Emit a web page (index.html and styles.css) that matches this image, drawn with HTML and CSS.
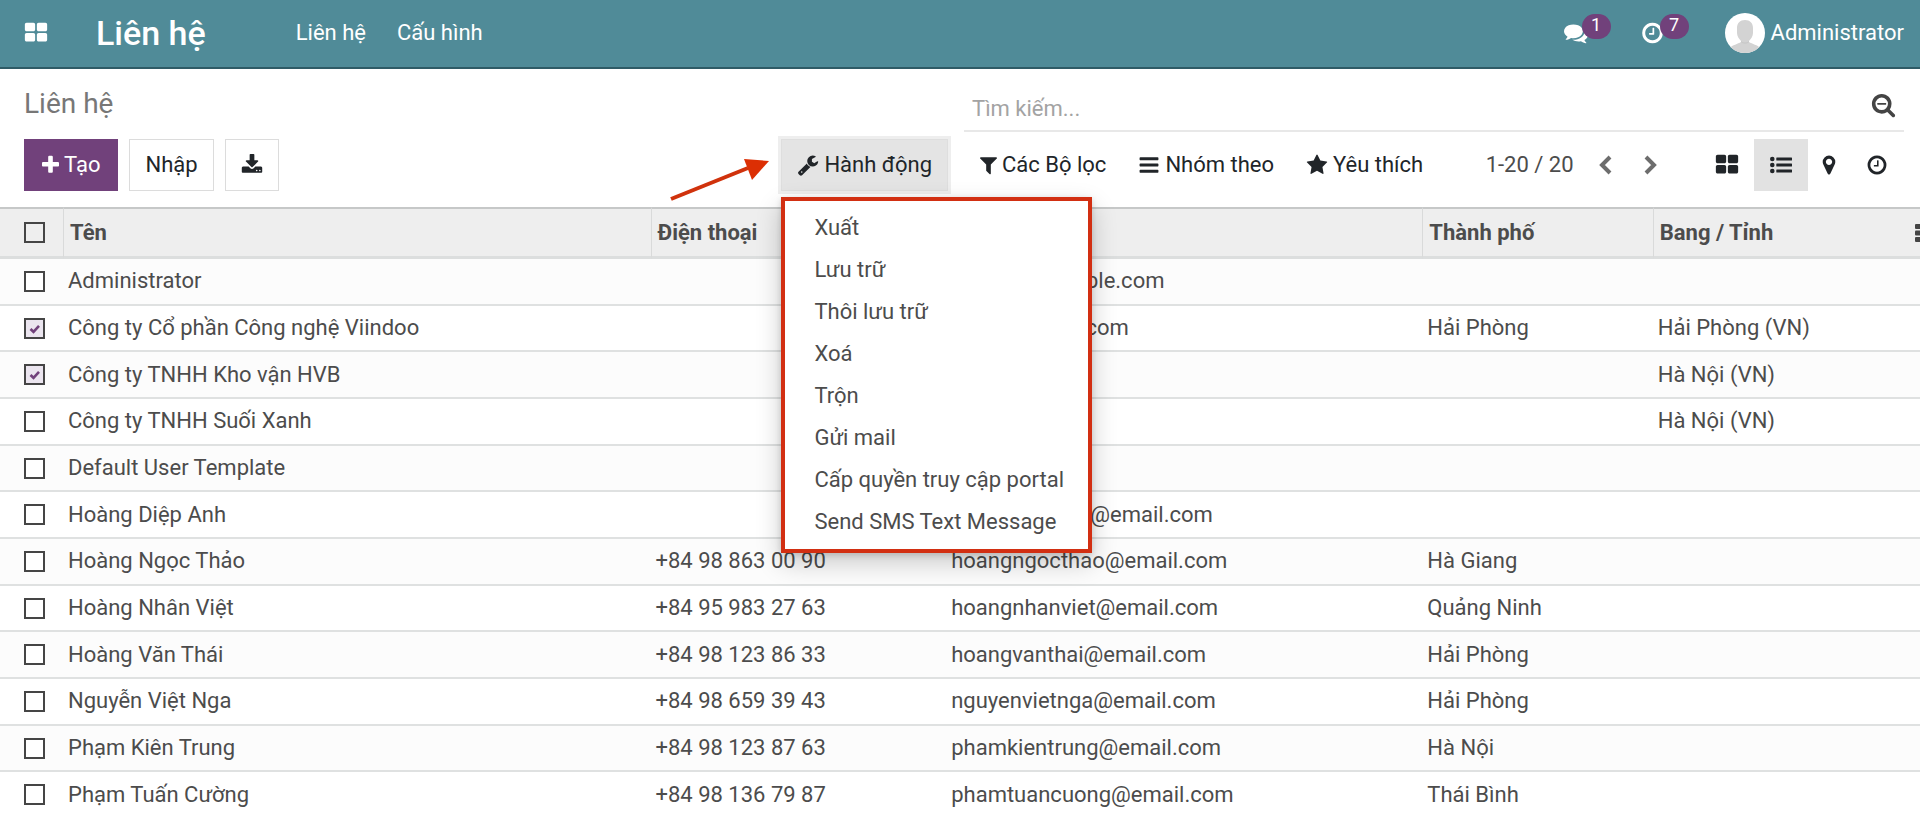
FILE: index.html
```html
<!DOCTYPE html>
<html lang="vi">
<head>
<meta charset="utf-8">
<meta name="viewport" content="width=device-width, initial-scale=1">
<title>Liên hệ</title>
<link rel="stylesheet" href="styles.css">
</head>
<body>
<svg class="sprite" aria-hidden="true">
  <symbol id="i-apps" viewBox="0 0 1792 1792"><path d="M832 1024v384q0 52-38 90t-90 38h-512q-52 0-90-38t-38-90v-384q0-52 38-90t90-38h512q52 0 90 38t38 90zm0-768v384q0 52-38 90t-90 38h-512q-52 0-90-38t-38-90v-384q0-52 38-90t90-38h512q52 0 90 38t38 90zm896 768v384q0 52-38 90t-90 38h-512q-52 0-90-38t-38-90v-384q0-52 38-90t90-38h512q52 0 90 38t38 90zm0-768v384q0 52-38 90t-90 38h-512q-52 0-90-38t-38-90v-384q0-52 38-90t90-38h512q52 0 90 38t38 90z"/></symbol>
  <symbol id="i-plus" viewBox="192 0 1408 1792"><path d="M1600 736v192q0 40-28 68t-68 28h-416v416q0 40-28 68t-68 28h-192q-40 0-68-28t-28-68v-416h-416q-40 0-68-28t-28-68v-192q0-40 28-68t68-28h416v-416q0-40 28-68t68-28h192q40 0 68 28t28 68v416h416q40 0 68 28t28 68z"/></symbol>
  <symbol id="i-star" viewBox="0 0 1792 1792"><path d="M1728 647q0 22-26 48l-363 354 86 500q1 7 1 20 0 21-10.500 35.500t-30.500 14.500q-19 0-40-12l-449-236-449 236q-22 12-40 12-21 0-31.500-14.500t-10.500-35.500q0-6 2-20l86-500-364-354q-25-27-25-48 0-37 56-46l502-73 225-455q19-41 49-41t49 41l225 455 502 73q56 9 56 46z"/></symbol>
  <symbol id="i-bars" viewBox="0 0 1792 1792"><path d="M1664 1344v128q0 26-19 45t-45 19h-1408q-26 0-45-19t-19-45v-128q0-26 19-45t45-19h1408q26 0 45 19t19 45zm0-512v128q0 26-19 45t-45 19h-1408q-26 0-45-19t-19-45v-128q0-26 19-45t45-19h1408q26 0 45 19t19 45zm0-512v128q0 26-19 45t-45 19h-1408q-26 0-45-19t-19-45v-128q0-26 19-45t45-19h1408q26 0 45 19t19 45z"/></symbol>
  <symbol id="i-filter" viewBox="192 0 1408 1792"><path d="M1595 295q17 41-14 70l-493 493v742q0 42-39 59-13 5-25 5-27 0-45-19l-256-256q-19-19-19-45v-486l-493-493q-31-29-14-70 17-39 59-39h1280q42 0 59 39z"/></symbol>
  <symbol id="i-wrench" viewBox="0 0 1792 1792"><path d="M448 1472q0-26-19-45t-45-19-45 19-19 45 19 45 45 19 45-19 19-45zm644-420l-682 682q-37 37-90 37-52 0-91-37l-106-108q-38-36-38-90 0-53 38-91l681-681q39 98 114.500 173.500t173.500 114.500zm634-435q0 39-23 106-47 134-164.500 217.500t-258.500 83.500q-185 0-316.500-131.500t-131.500-316.500 131.500-316.500 316.500-131.500q58 0 121.500 16.500t107.500 46.500q16 11 16 28t-16 28l-293 169v224l193 107q5-3 79-48.500t135.500-81 70.500-35.500q15 0 23.500 10t8.500 25z"/></symbol>
  <symbol id="i-clock" viewBox="128 0 1536 1792"><path d="M1024 544v448q0 14-9 23t-23 9h-320q-14 0-23-9t-9-23v-64q0-14 9-23t23-9h224v-352q0-14 9-23t23-9h64q14 0 23 9t9 23zm416 352q0-148-73-273t-198-198-273-73-273 73-198 198-73 273 73 273 198 198 273 73 273-73 198-198 73-273zm224 0q0 209-103 385.500t-279.500 279.500-385.500 103-385.500-103-279.500-279.500-103-385.500 103-385.500 279.500-279.500 385.500-103 385.500 103 279.500 279.500 103 385.500z"/></symbol>
  <symbol id="i-pin" viewBox="0 0 1792 1792"><path d="M1152 640q0-106-75-181t-181-75-181 75-75 181 75 181 181 75 181-75 75-181zm256 0q0 109-33 179l-364 774q-16 33-47.500 52t-67.500 19-67.500-19-46.500-52l-365-774q-33-70-33-179 0-212 150-362t362-150 362 150 150 362z"/></symbol>
  <symbol id="i-list" viewBox="0 0 22 22"><circle cx="2.300" cy="5" r="2.300"/><circle cx="2.300" cy="11" r="2.300"/><circle cx="2.300" cy="17" r="2.300"/><rect x="6.300" y="3.600" width="15.700" height="2.800" rx=".5"/><rect x="6.300" y="9.600" width="15.700" height="2.800" rx=".5"/><rect x="6.300" y="15.600" width="15.700" height="2.800" rx=".5"/></symbol>
  <symbol id="i-search" viewBox="0 0 1792 1792"><path d="M1088 672v64q0 13-9.500 22.500t-22.500 9.500h-576q-13 0-22.500-9.500t-9.500-22.500v-64q0-13 9.500-22.500t22.500-9.500h576q13 0 22.500 9.500t9.500 22.500zm128 32q0-185-131.500-316.500t-316.500-131.500-316.500 131.500-131.500 316.500 131.500 316.500 316.500 131.500 316.500-131.500 131.500-316.500zm512 832q0 53-37.500 90.500t-90.500 37.500q-54 0-90-38l-343-342q-179 124-399 124-143 0-273.500-55.500t-225-150-150-225-55.500-273.500 55.500-273.500 150-225 225-150 273.500-55.500 273.500 55.500 225 150 150 225 55.500 273.500q0 220-124 399l343 343q37 37 37 90z"/></symbol>
  <symbol id="i-download" viewBox="0 0 1792 1792"><path d="M1344 1344q0-26-19-45t-45-19-45 19-19 45 19 45 45 19 45-19 19-45zm256 0q0-26-19-45t-45-19-45 19-19 45 19 45 45 19 45-19 19-45zm128-224v320q0 40-28 68t-68 28h-1472q-40 0-68-28t-28-68v-320q0-40 28-68t68-28h465l135 136q58 56 136 56t136-56l136-136h464q40 0 68 28t28 68zm-325-569q17 41-14 70l-448 448q-18 19-45 19t-45-19l-448-448q-31-29-14-70 17-39 59-39h256v-448q0-26 19-45t45-19h256q26 0 45 19t19 45v448h256q42 0 59 39z"/></symbol>
  <symbol id="i-comments" viewBox="0 0 1792 1792"><path d="M1408 768q0 139-94 257t-256.500 186.500-353.500 68.500q-86 0-176-16-124 88-278 128-36 9-86 16h-3q-11 0-20.500-8t-11.500-21q-1-3-1-6.500t.5-6.500 2-6l2.500-5 3.500-5.500 4-5 4.500-5 4-4.500q5-6 23-25t26-29.500 22.500-29 25-38.500 20.500-44q-124-72-195-177t-71-224q0-139 94-257t256.500-186.500 353.500-68.500 353.500 68.500 256.500 186.500 94 257zm384 256q0 120-71 224.500t-195 176.500q10 24 20.500 44t25 38.500 22.500 29 26 29.500 23 25q1 1 4 4.500t4.500 5 4 5 3.500 5.500l2.500 5 2 6 .5 6.500-1 6.500q-3 14-13 22t-22 7q-50-7-86-16-154-40-278-128-90 16-176 16-271 0-472-132 58 4 88 4 161 0 309-45t264-129q125-92 192-212t67-254q0-77-23-152 129 71 204 178t75 230z"/></symbol>
</svg>

<header class="navbar">
  <button class="nav-apps" type="button" aria-label="Ứng dụng"><svg class="icon icon-lg"><use href="#i-apps"/></svg></button>
  <a class="brand" href="#">Liên hệ</a>
  <nav class="nav-menu">
    <a href="#">Liên hệ</a>
    <a href="#">Cấu hình</a>
  </nav>
  <div class="systray">
    <button class="tray-item" type="button" aria-label="Tin nhắn"><svg class="icon icon-lg"><use href="#i-comments"/></svg><span class="badge">1</span></button>
    <button class="tray-item" type="button" aria-label="Hoạt động"><svg class="icon icon-clock"><use href="#i-clock"/></svg><span class="badge">7</span></button>
    <button class="user" type="button">
      <svg class="avatar" viewBox="0 0 40 40" aria-hidden="true"><defs><clipPath id="disc"><circle cx="20" cy="20" r="20"/></clipPath></defs><g clip-path="url(#disc)"><path fill="#fff" d="M0 0h40v40H0z"/><path fill="#d3d3d3" d="M20 7c5 0 8 3 8 8v5c0 3-2 6-4 8v1c3 2 9 3 11 6v5H5v-5c2-3 8-4 11-6v-1c-2-2-4-5-4-8v-5c0-5 3-8 8-8z"/><path fill="#c6c6c6" d="M16 28c2 2 6 2 8 0v1c-2 2-6 2-8 0z"/></g></svg>
      Administrator
    </button>
  </div>
</header>

<section class="control-panel">
  <h1 class="page-title">Liên hệ</h1>
  <div class="search">
    <input class="search-input" type="search" placeholder="Tìm kiếm..." aria-label="Tìm kiếm">
    <button class="search-btn" type="button" aria-label="Tìm"><svg class="icon icon-xl"><use href="#i-search"/></svg></button>
  </div>
  <div class="actions">
    <button class="btn btn-primary" type="button"><svg class="icon icon-narrow"><use href="#i-plus"/></svg>Tạo</button>
    <button class="btn btn-outline" type="button">Nhập</button>
    <button class="btn btn-outline" type="button" aria-label="Tải xuống"><svg class="icon"><use href="#i-download"/></svg></button>
    <div class="dropdown">
      <svg class="arrow" viewBox="0 0 102 46" aria-hidden="true"><path d="M3 41L80 10" stroke="#d0320c" stroke-width="4" fill="none"/><path d="M76 1l25 2-17 19z" fill="#dc2f04"/></svg>
      <button class="btn btn-active" type="button" aria-expanded="true"><svg class="icon"><use href="#i-wrench"/></svg>Hành động</button>
      <div class="menu">
        <button class="menu-item" type="button">Xuất</button>
        <button class="menu-item" type="button">Lưu trữ</button>
        <button class="menu-item" type="button">Thôi lưu trữ</button>
        <button class="menu-item" type="button">Xoá</button>
        <button class="menu-item" type="button">Trộn</button>
        <button class="menu-item" type="button">Gửi mail</button>
        <button class="menu-item" type="button">Cấp quyền truy cập portal</button>
        <button class="menu-item" type="button">Send SMS Text Message</button>
      </div>
    </div>
  </div>
  <div class="tools">
    <div class="filters">
      <button class="btn" type="button"><svg class="icon icon-narrow"><use href="#i-filter"/></svg>Các Bộ lọc</button>
      <button class="btn" type="button"><svg class="icon"><use href="#i-bars"/></svg>Nhóm theo</button>
      <button class="btn" type="button"><svg class="icon"><use href="#i-star"/></svg>Yêu thích</button>
    </div>
    <div class="pager">
      <span class="pager-text">1-20 / 20</span>
      <button class="pager-btn" type="button" aria-label="Trang trước"><svg class="chevron" viewBox="0 0 14 20"><path d="M12 2L4 10l8 8"/></svg></button>
      <button class="pager-btn" type="button" aria-label="Trang sau"><svg class="chevron" viewBox="0 0 14 20"><path d="M2 2l8 8-8 8"/></svg></button>
    </div>
    <div class="views">
      <button class="view" type="button" aria-label="Kanban"><svg class="icon icon-lg"><use href="#i-apps"/></svg></button>
      <button class="view view-on" type="button" aria-label="Danh sách"><svg class="icon"><use href="#i-list"/></svg></button>
      <button class="view view-slim" type="button" aria-label="Bản đồ"><svg class="icon"><use href="#i-pin"/></svg></button>
      <button class="view" type="button" aria-label="Hoạt động"><svg class="icon"><use href="#i-clock"/></svg></button>
    </div>
  </div>
</section>

<main class="list">
  <table class="table">
    <colgroup><col class="c-check"><col class="c-name"><col class="c-phone"><col class="c-email"><col class="c-city"><col class="c-state"></colgroup>
    <thead>
      <tr>
        <th><input class="check" type="checkbox" aria-label="Chọn tất cả"></th>
        <th>Tên</th><th>Điện thoại</th><th>Email</th><th>Thành phố</th>
        <th><div class="th-last">Bang / Tỉnh<button class="more" type="button" aria-label="Cột"><svg class="more-icon" viewBox="0 0 5 18"><rect width="7" height="5" rx="1"/><rect y="6.500" width="7" height="5" rx="1"/><rect y="13" width="7" height="5" rx="1"/></svg></button></div></th>
      </tr>
    </thead>
    <tbody>
      <tr><td><input class="check" type="checkbox" aria-label="Administrator"></td><td>Administrator</td><td></td><td>admin@example.com</td><td></td><td></td></tr>
      <tr><td><input class="check" type="checkbox" checked aria-label="Công ty Cổ phần Công nghệ Viindoo"></td><td>Công ty Cổ phần Công nghệ Viindoo</td><td></td><td>info@viindoo.com</td><td>Hải Phòng</td><td>Hải Phòng (VN)</td></tr>
      <tr><td><input class="check" type="checkbox" checked aria-label="Công ty TNHH Kho vận HVB"></td><td>Công ty TNHH Kho vận HVB</td><td></td><td></td><td></td><td>Hà Nội (VN)</td></tr>
      <tr><td><input class="check" type="checkbox" aria-label="Công ty TNHH Suối Xanh"></td><td>Công ty TNHH Suối Xanh</td><td></td><td></td><td></td><td>Hà Nội (VN)</td></tr>
      <tr><td><input class="check" type="checkbox" aria-label="Default User Template"></td><td>Default User Template</td><td></td><td></td><td></td><td></td></tr>
      <tr><td><input class="check" type="checkbox" aria-label="Hoàng Diệp Anh"></td><td>Hoàng Diệp Anh</td><td></td><td>hoangdiepanh@email.com</td><td></td><td></td></tr>
      <tr><td><input class="check" type="checkbox" aria-label="Hoàng Ngọc Thảo"></td><td>Hoàng Ngọc Thảo</td><td>+84 98 863 00 90</td><td>hoangngocthao@email.com</td><td>Hà Giang</td><td></td></tr>
      <tr><td><input class="check" type="checkbox" aria-label="Hoàng Nhân Việt"></td><td>Hoàng Nhân Việt</td><td>+84 95 983 27 63</td><td>hoangnhanviet@email.com</td><td>Quảng Ninh</td><td></td></tr>
      <tr><td><input class="check" type="checkbox" aria-label="Hoàng Văn Thái"></td><td>Hoàng Văn Thái</td><td>+84 98 123 86 33</td><td>hoangvanthai@email.com</td><td>Hải Phòng</td><td></td></tr>
      <tr><td><input class="check" type="checkbox" aria-label="Nguyễn Việt Nga"></td><td>Nguyễn Việt Nga</td><td>+84 98 659 39 43</td><td>nguyenvietnga@email.com</td><td>Hải Phòng</td><td></td></tr>
      <tr><td><input class="check" type="checkbox" aria-label="Phạm Kiên Trung"></td><td>Phạm Kiên Trung</td><td>+84 98 123 87 63</td><td>phamkientrung@email.com</td><td>Hà Nội</td><td></td></tr>
      <tr><td><input class="check" type="checkbox" aria-label="Phạm Tuấn Cường"></td><td>Phạm Tuấn Cường</td><td>+84 98 136 79 87</td><td>phamtuancuong@email.com</td><td>Thái Bình</td><td></td></tr>
    </tbody>
  </table>
</main>
</body>
</html>
```
FILE: styles.css
```css
* { box-sizing: border-box; }
body {
  margin: 0;
  min-height: 100vh;
  display: flex;
  flex-direction: column;
  background: #fff;
  color: #4c4c4c;
  font: 22px/26px Roboto, "Noto Sans", sans-serif;
}
button, input { font: inherit; color: inherit; margin: 0; }
button { background: none; border: 0; padding: 0; cursor: pointer; white-space: nowrap; }
a { color: inherit; text-decoration: none; }
.sprite { position: absolute; width: 0; height: 0; }
.icon { width: 22px; height: 22px; fill: currentColor; flex: none; display: block; }
.icon-narrow { width: 17px; }
.icon-lg { width: 24px; height: 24px; }
.icon-clock { width: 21px; height: 24px; }
.icon-xl { width: 25px; height: 25px; }

/* Top bar */
.navbar {
  display: flex;
  align-items: center;
  min-height: 69px;
  padding: 0 16px 2px 24px;
  background: #508b98;
  border-bottom: 2px solid #2f5b66;
  color: #fff;
}
.brand { margin-left: 48px; font-size: 34px; line-height: 40px; font-weight: 500; }
.nav-menu { display: flex; gap: 31px; margin-left: 90px; }
.systray { display: flex; align-items: center; margin-left: auto; }
.tray-item { position: relative; margin-right: 54px; }
.badge {
  position: absolute;
  left: 18px;
  top: -7px;
  width: 29px;
  height: 25px;
  border-radius: 13px;
  background: #71417b;
  font-size: 18px;
  line-height: 22px;
}
.user { display: flex; align-items: center; gap: 6px; margin-left: 8px; }
.avatar { width: 40px; height: 40px; }

/* Control panel */
.control-panel {
  display: grid;
  grid-template-columns: minmax(0, 1fr) 50%;
  grid-template-rows: minmax(49px, auto) auto;
  gap: 7px 16px;
  padding: 14px 16px 16px 24px;
}
.page-title { margin: 0; font-size: 28px; line-height: 42px; font-weight: 400; color: #777; }
.search { display: flex; align-items: center; border-bottom: 2px solid #e8e8e8; }
.search-input {
  flex: 1;
  min-width: 0;
  padding: 4px 8px 0;
  border: 0;
  outline: 0;
  background: none;
}
.search-input::placeholder { color: #a3a3a3; opacity: 1; }
.search-btn { padding: 0 8px; color: #444; }
.actions, .tools, .filters, .pager, .views { display: flex; align-items: center; }
.actions { gap: 11px; }
.btn {
  display: flex;
  align-items: center;
  gap: 5px;
  height: 52px;
  padding: 0 16px;
  color: #212529;
}
.btn-primary { padding: 0 18px; background: #71417b; color: #fff; }
.btn-outline { padding: 0 15px; border: 1px solid #dcdcdc; }
.btn-active { padding: 0 15px; background: #e4e4e4; border: 1px solid #dedede; box-shadow: 0 0 0 3px #eee; }
.dropdown { position: relative; margin-left: auto; }
.arrow { position: absolute; right: 178px; top: 19px; width: 102px; height: 46px; }
.menu {
  position: absolute;
  left: 0;
  top: 58px;
  z-index: 2;
  padding: 6px 0;
  background: #fff;
  border: 4px solid #d22f12;
  box-shadow: 0 10px 24px rgba(0, 0, 0, .2), 0 2px 6px rgba(0, 0, 0, .15);
}
.menu-item { display: block; width: 100%; padding: 8px 24px 8px 29px; text-align: left; }
.tools { justify-content: space-between; }
.pager { margin-left: 20px; }
.pager-btn { padding: 0 16px; }
.pager-text { padding-right: 8px; }
.chevron { display: block; width: 14px; height: 20px; fill: none; stroke: #6d6d6d; stroke-width: 4; }
.view { display: grid; place-items: center; width: 54px; height: 52px; color: #212529; }
.view-on { background: #e2e2e2; }
.view-slim { width: 42px; }

/* Records */
.list { flex: 1; display: grid; }
.table { width: 100%; height: 100%; table-layout: fixed; border-collapse: separate; border-spacing: 0; }
.c-check { width: 63px; }
.c-name { width: 30.6%; }
.c-phone { width: 15.4%; }
.c-email { width: 24.8%; }
.c-city { width: 12%; }
th {
  height: 52px;
  padding: 0 6px;
  background: #eee;
  border-top: 2px solid #c6c8c8;
  border-bottom: 3px solid #dcdede;
  text-align: left;
  font-weight: 700;
}
th + th { border-left: 1px solid #d9dada; }
th:first-child, td:first-child { padding: 0 0 0 24px; }
.th-last { display: flex; align-items: center; justify-content: space-between; margin-right: -6px; }
.more-icon { display: block; width: 5px; height: 18px; fill: #444; }
td { padding: 8px 5px; border-bottom: 2px solid #dfe1e1; white-space: nowrap; }
tbody tr:nth-child(odd) { background: #fcfcfc; }
tbody tr:last-child td { border-bottom: 0; }
.check {
  appearance: none;
  display: block;
  width: 21px;
  height: 21px;
  border: 2px solid #454545;
  background: #fff;
}
thead .check { background: transparent; }
.check:checked {
  background: #ebe5ef url("data:image/svg+xml,%3Csvg xmlns='http://www.w3.org/2000/svg' viewBox='0 0 17 17'%3E%3Cpath d='M4.500 9l3 2.800 5.500-6' fill='none' stroke='%2371417b' stroke-width='2.600'/%3E%3C/svg%3E") center / contain no-repeat;
}
```
